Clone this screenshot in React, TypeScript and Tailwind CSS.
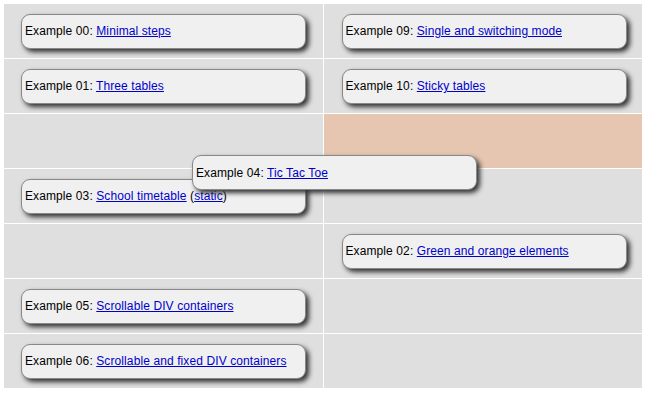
import React from "react";

type Item = { num: string; title: string; extra?: string };

const rows: [Item | null, Item | null][] = [
  [{ num: "00", title: "Minimal steps" }, { num: "09", title: "Single and switching mode" }],
  [{ num: "01", title: "Three tables" }, { num: "10", title: "Sticky tables" }],
  [null, null],
  [{ num: "03", title: "School timetable", extra: "static" }, null],
  [null, { num: "02", title: "Green and orange elements" }],
  [{ num: "05", title: "Scrollable DIV containers" }, null],
  [{ num: "06", title: "Scrollable and fixed DIV containers" }, null],
];

function Box({ item, className = "" }: { item: Item; className?: string }) {
  return (
    <div
      className={`flex h-[35px] w-[285px] items-center rounded-[9px] border border-[#888888] bg-[#f0f0f0] px-[3px] text-[12px] tracking-[0.1px] text-black shadow-[3px_3px_5px_#333] ${className}`}
    >
      <span className="whitespace-nowrap">
        Example {item.num}:{" "}
        <a href="#" className="text-[#0000cc] underline">
          {item.title}
        </a>
        {item.extra && (
          <>
            {" ("}
            <a href="#" className="text-[#0000cc] underline">
              {item.extra}
            </a>
            )
          </>
        )}
      </span>
    </div>
  );
}

export default function App() {
  return (
    <div
      className="relative h-[393px] w-[646px] bg-white p-1"
      style={{ fontFamily: '"Liberation Sans", Arial, sans-serif' }}
    >
      <div className="grid w-[638px] grid-cols-2 gap-px">
        {rows.map((row, r) =>
          row.map((item, c) => (
            <div
              key={`${r}-${c}`}
              className={`flex h-[54px] items-center ${c === 0 ? "pl-[17px]" : "pl-[18px]"} ${
                r === 2 && c === 1 ? "bg-[#e6c6b1]" : "bg-[#dfdfdf]"
              }`}
            >
              {item && <Box item={item} />}
            </div>
          ))
        )}
      </div>
      {/* item being dragged */}
      <Box
        item={{ num: "04", title: "Tic Tac Toe" }}
        className="absolute left-[192px] top-[155px] h-[34px]"
      />
    </div>
  );
}
